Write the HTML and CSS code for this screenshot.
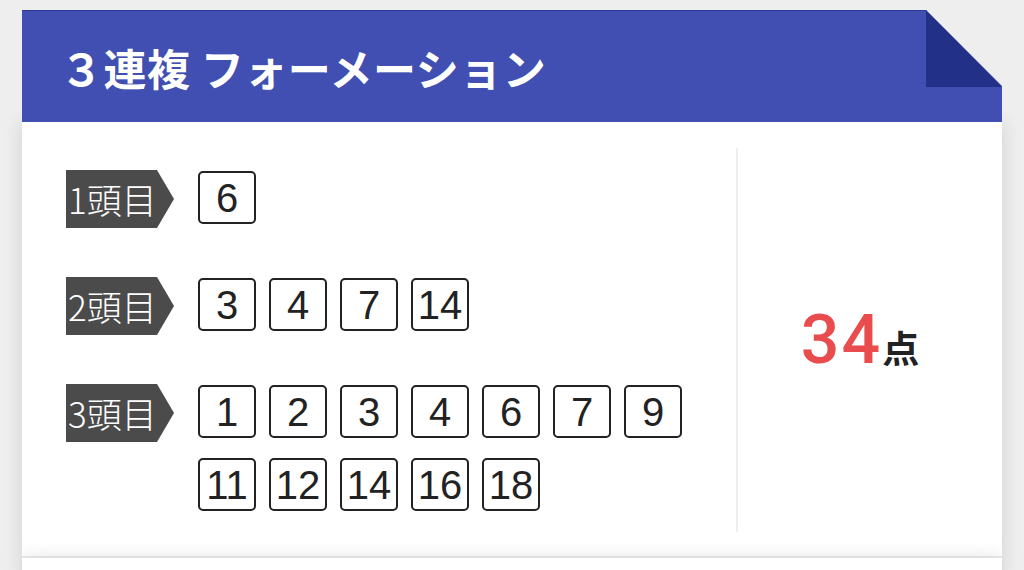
FILE: index.html
```html
<!DOCTYPE html>
<html lang="ja">
<head>
    <meta charset="UTF-8">
    <meta name="viewport" content="width=device-width, initial-scale=1.0">
    <title>3連複 フォーメーション</title>
    <link rel="stylesheet" href="styles.css">
</head>
<body>
    <div class="card">
        <header class="card-head">
            <h1>３連複 フォーメーション</h1>
        </header>
        <div class="card-body">
            <div class="picks">
                <div class="pick-row">
                    <span class="tag">1頭目</span>
                    <div class="nums">
                        <span class="num">6</span>
                    </div>
                </div>
                <div class="pick-row">
                    <span class="tag">2頭目</span>
                    <div class="nums">
                        <span class="num">3</span>
                        <span class="num">4</span>
                        <span class="num">7</span>
                        <span class="num">14</span>
                    </div>
                </div>
                <div class="pick-row">
                    <span class="tag">3頭目</span>
                    <div class="nums">
                        <span class="num">1</span>
                        <span class="num">2</span>
                        <span class="num">3</span>
                        <span class="num">4</span>
                        <span class="num">6</span>
                        <span class="num">7</span>
                        <span class="num">9</span>
                        <span class="num">11</span>
                        <span class="num">12</span>
                        <span class="num">14</span>
                        <span class="num">16</span>
                        <span class="num">18</span>
                    </div>
                </div>
            </div>
            <div class="total">
                <span class="total-count">34</span><span class="total-unit">点</span>
            </div>
        </div>
        <div class="card-foot"></div>
    </div>
</body>
</html>
```

FILE: styles.css
```css
body { margin: 0; padding: 0; background-color: #eeeeee; font-family: "Liberation Sans", "Noto Sans CJK JP", sans-serif; color: #222; overflow: hidden; }
.card { margin: 10px 22px 0; width: 980px; }

/* header band with the folded top-right corner */
.card-head { position: relative; height: 112px; background-color: #404fb1; border-top: 1px solid #2e3a94; box-sizing: border-box; display: flex; align-items: center; padding-left: 38px; clip-path: polygon(0 0, 904px 0, 980px 76px, 980px 100%, 0 100%); }
.card-head::after { content: ""; position: absolute; top: -1px; right: 0; width: 76px; height: 77px; background-color: #233088; clip-path: polygon(0 0, 0 100%, 100% 100%); }
.card-head h1 { margin: 0; color: #fff; font-family: "Noto Sans CJK JP", sans-serif; font-weight: 700; font-size: 43px; letter-spacing: 0.5px; }

.card-body { display: flex; background-color: #fff; padding: 26px 0 24px; border-bottom: 2px solid #ececec; box-shadow: 0 0 18px rgba(0, 0, 0, 0.12); }
.picks { flex: 1; padding: 22px 0 21px 44px; border-right: 2px solid #eeeeee; display: flex; flex-direction: column; gap: 49px; }
.pick-row { display: flex; align-items: flex-start; }
.tag { flex: none; width: 108px; height: 58px; box-sizing: border-box; padding-left: 2px; background-color: #4b4b4b; color: #fff; font-family: "Noto Sans CJK JP", sans-serif; font-weight: 300; font-size: 35px; line-height: 58px; clip-path: polygon(0 0, 91px 0, 108px 50%, 91px 100%, 0 100%); }
.nums { flex: 1; display: flex; flex-wrap: wrap; gap: 20px 13px; margin: 1px 0 0 24px; }
.num { width: 58px; height: 53px; box-sizing: border-box; border: 2px solid #222; border-radius: 5px; display: flex; align-items: center; justify-content: center; font-size: 40px; line-height: 1; color: #222; }

.total { width: 264px; display: flex; align-items: baseline; justify-content: center; padding-right: 20px; box-sizing: border-box; align-self: center; }
.total-count { color: #e84c4c; font-family: Roboto, "Liberation Sans", sans-serif; font-size: 68px; font-weight: 500; letter-spacing: 2px; line-height: 1; }
.total-unit { font-family: "Noto Sans CJK JP", sans-serif; font-size: 37px; font-weight: 700; line-height: 1; margin-left: 0; }

.card-foot { height: 40px; background-color: #fff; box-shadow: 0 0 18px rgba(0, 0, 0, 0.12); }
```
